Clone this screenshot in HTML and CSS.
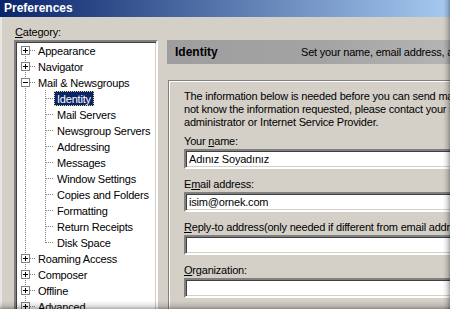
FILE: index.html
```html
<!DOCTYPE html>
<html>
<head>
<meta charset="utf-8">
<title>Preferences</title>
<link rel="stylesheet" href="styles.css">
</head>
<body>
<div class="window">
  <div class="titlebar">Preferences</div>
  <div class="main">
    <div class="left">
      <div class="cat-label"><u>C</u>ategory:</div>
      <div class="tree">
        <div class="row top first"><span class="gut"><span class="exp plus"></span></span><span class="item">Appearance</span></div>
        <div class="row top"><span class="gut"><span class="exp plus"></span></span><span class="item">Navigator</span></div>
        <div class="row top"><span class="gut"><span class="exp minus"></span></span><span class="item">Mail &amp; Newsgroups</span></div>
        <div class="row child"><span class="gut"></span><span class="item sel">Identity</span></div>
        <div class="row child"><span class="gut"></span><span class="item">Mail Servers</span></div>
        <div class="row child"><span class="gut"></span><span class="item">Newsgroup Servers</span></div>
        <div class="row child"><span class="gut"></span><span class="item">Addressing</span></div>
        <div class="row child"><span class="gut"></span><span class="item">Messages</span></div>
        <div class="row child"><span class="gut"></span><span class="item">Window Settings</span></div>
        <div class="row child"><span class="gut"></span><span class="item">Copies and Folders</span></div>
        <div class="row child"><span class="gut"></span><span class="item">Formatting</span></div>
        <div class="row child"><span class="gut"></span><span class="item">Return Receipts</span></div>
        <div class="row child last"><span class="gut"></span><span class="item">Disk Space</span></div>
        <div class="row top"><span class="gut"><span class="exp plus"></span></span><span class="item">Roaming Access</span></div>
        <div class="row top"><span class="gut"><span class="exp plus"></span></span><span class="item">Composer</span></div>
        <div class="row top"><span class="gut"><span class="exp plus"></span></span><span class="item">Offline</span></div>
        <div class="row top"><span class="gut"><span class="exp plus"></span></span><span class="item">Advanced</span></div>
      </div>
    </div>
    <div class="right">
      <div class="header">
        <span class="h-title">Identity</span>
        <span class="h-desc">Set your name, email address, and signature</span>
      </div>
      <div class="frame">
        <p class="intro">The information below is needed before you can send mail. If you do<br>not know the information requested, please contact your system<br>administrator or Internet Service Provider.</p>
        <div class="field">
          <div class="lbl">Your <u>n</u>ame:</div>
          <div class="input">Adınız Soyadınız</div>
        </div>
        <div class="field">
          <div class="lbl">E<u>m</u>ail address:</div>
          <div class="input">isim@ornek.com</div>
        </div>
        <div class="field">
          <div class="lbl"><u>R</u>eply-to address(only needed if different from email address):</div>
          <div class="input"></div>
        </div>
        <div class="field">
          <div class="lbl"><u>O</u>rganization:</div>
          <div class="input"></div>
        </div>
        <div class="field">
          <div class="lbl">Signature File:</div>
        </div>
      </div>
    </div>
  </div>
</div>
</body>
</html>
```

FILE: styles.css
```css
* { box-sizing: border-box; }
html, body { margin: 0; padding: 0; }
body {
  width: 450px;
  height: 309px;
  overflow: hidden;
  background: #d4d0c8;
  font-family: "Liberation Sans", Arial, sans-serif;
  font-size: 11px;
  letter-spacing: -0.2px;
  color: #000;
}
.window {
  position: relative;
  width: 450px;
  height: 309px;
  overflow: hidden;
  background: #d4d0c8;
}
.window::after {
  content: "";
  position: absolute;
  left: 0; top: 0; right: 0; bottom: 0;
  pointer-events: none;
  background:
    linear-gradient(to left, rgba(0,0,0,0.32), rgba(0,0,0,0.12) 3px, rgba(0,0,0,0) 7px),
    linear-gradient(to top, rgba(0,0,0,0.32), rgba(0,0,0,0.12) 3px, rgba(0,0,0,0) 8px);
}
.titlebar {
  height: 17px;
  line-height: 17px;
  padding-left: 4px;
  color: #fff;
  font-weight: bold;
  font-size: 12px;
  letter-spacing: 0;
  background: linear-gradient(to right, #0a246a, #a6caf0);
}
.main {
  display: flex;
  gap: 9px;
  padding-top: 9px;
  padding-left: 12px;
  border-left: 2px solid #e9e7e2;
  height: 292px;
}
.left {
  width: 144px;
  flex: none;
}
.cat-label {
  line-height: 13px;
  height: 13px;
  padding-left: 1px;
  margin-bottom: 1px;
}
.tree {
  background: #fff;
  border: 2px solid;
  border-color: #808080 #fff #fff #808080;
  box-shadow: inset 1px 1px 0 #404040, inset -1px -1px 0 #d4d0c8;
  height: 300px;
  padding-top: 0;
}
.row {
  display: flex;
  align-items: center;
  height: 16px;
  white-space: nowrap;
}
.gut {
  flex: none;
  height: 16px;
  display: flex;
  align-items: center;
}
.row.top .gut {
  width: 19px;
  background:
    repeating-linear-gradient(to bottom, #808080 0 1px, transparent 1px 2px) 9px 0 / 1px 100% no-repeat,
    repeating-linear-gradient(to right, #808080 0 1px, transparent 1px 2px) 14px 8px / 5px 1px no-repeat;
}
.row.top.first .gut {
  background:
    repeating-linear-gradient(to bottom, #808080 0 1px, transparent 1px 2px) 9px 8px / 1px 8px no-repeat,
    repeating-linear-gradient(to right, #808080 0 1px, transparent 1px 2px) 14px 8px / 5px 1px no-repeat;
}
.row.child .gut {
  width: 38px;
  background:
    repeating-linear-gradient(to bottom, #808080 0 1px, transparent 1px 2px) 9px 0 / 1px 100% no-repeat,
    repeating-linear-gradient(to bottom, #808080 0 1px, transparent 1px 2px) 29px 0 / 1px 100% no-repeat,
    repeating-linear-gradient(to right, #808080 0 1px, transparent 1px 2px) 30px 8px / 8px 1px no-repeat;
}
.row.child.last .gut {
  background:
    repeating-linear-gradient(to bottom, #808080 0 1px, transparent 1px 2px) 9px 0 / 1px 100% no-repeat,
    repeating-linear-gradient(to bottom, #808080 0 1px, transparent 1px 2px) 29px 0 / 1px 9px no-repeat,
    repeating-linear-gradient(to right, #808080 0 1px, transparent 1px 2px) 30px 8px / 8px 1px no-repeat;
}
.exp {
  width: 9px;
  height: 9px;
  margin-left: 5px;
  margin-top: 1px;
  border: 1px solid #808080;
}
.exp.plus {
  background:
    linear-gradient(#000, #000) 1px 3px / 5px 1px no-repeat,
    linear-gradient(#000, #000) 3px 1px / 1px 5px no-repeat,
    #fff;
}
.exp.minus {
  background:
    linear-gradient(#000, #000) 1px 3px / 5px 1px no-repeat,
    #fff;
}
.item {
  padding: 0 2px;
  line-height: 14px;
  height: 15px;
  margin-top: 1px;
  border: 1px solid transparent;
  display: flex;
  align-items: center;
}
.item.sel {
  background: #0a246a;
  color: #fff;
  border: 1px dotted #e8d87a;
}
.right {
  flex: 1;
  min-width: 0;
  padding-top: 14px;
}
.header {
  height: 24px;
  display: flex;
  align-items: center;
  padding-left: 8px;
  white-space: nowrap;
  background: linear-gradient(to right, #9e9e9e, #a3a3a3 50%, #b6b6b6);
  margin-bottom: 16px;
  width: 300px;
}
.h-title {
  width: 126px;
  flex: none;
  font-weight: bold;
  font-size: 12px;
  letter-spacing: 0;
}
.h-desc {
  font-size: 11px;
}
.frame {
  border-top: 1px solid #808080;
  border-left: 1px solid #808080;
  box-shadow: inset 1px 1px 0 #fff;
  margin-left: 1px;
  padding: 9px 0 0 15px;
  width: 300px;
  height: 240px;
  white-space: nowrap;
}
.intro {
  margin: 0 0 6px;
  line-height: 13px;
}
.field {
  margin-bottom: 9px;
}
.lbl {
  line-height: 13px;
  height: 13px;
  margin-bottom: 1px;
}
.input {
  height: 20px;
  width: 300px;
  background: #fff;
  border: 2px solid;
  border-color: #808080 #fff #fff #808080;
  box-shadow: inset 1px 1px 0 #404040, inset -1px -1px 0 #d4d0c8;
  padding: 0 3px;
  line-height: 16px;
}
```
